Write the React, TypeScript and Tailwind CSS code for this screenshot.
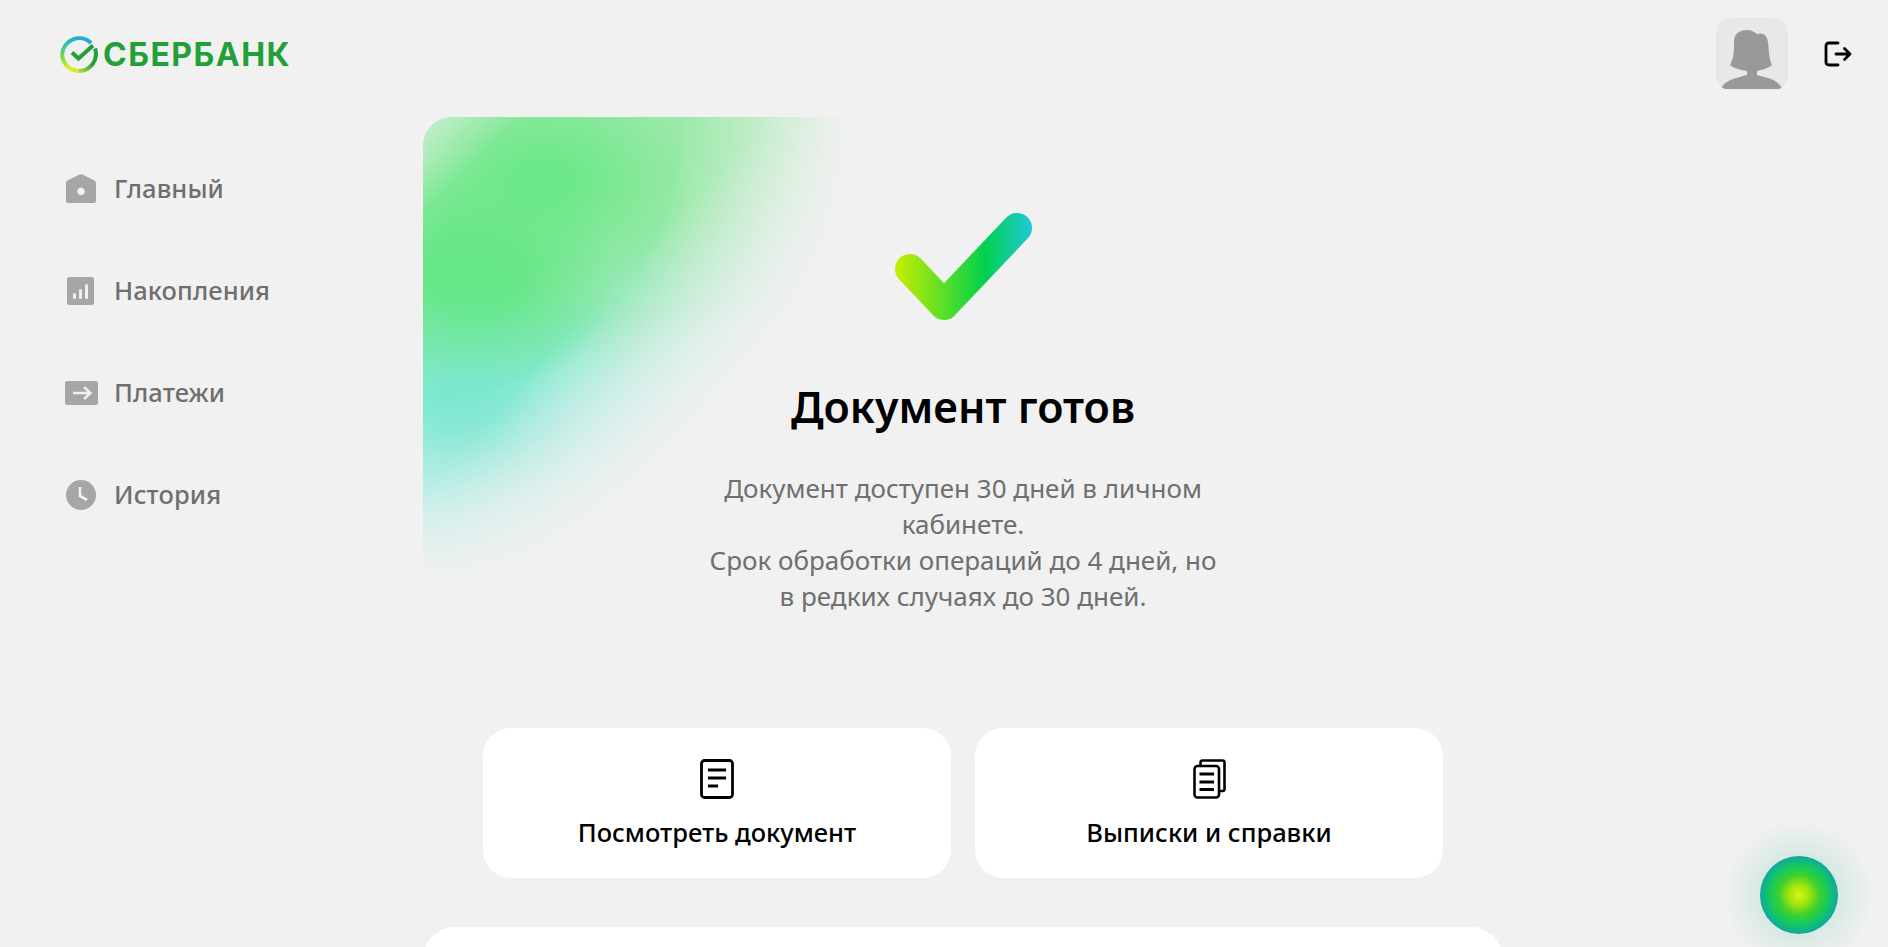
import { ReactNode } from "react";

const FONT = "font-['Noto_Sans','Open_Sans',sans-serif]";

function Logo() {
  return (
    <div className="flex items-center gap-[5px]">
      <svg width="38" height="38" viewBox="0 0 38 38" fill="none">
        <defs>
          <linearGradient id="ringTop" x1="32" y1="4" x2="3" y2="20" gradientUnits="userSpaceOnUse">
            <stop offset="0" stopColor="#1aa6e8" />
            <stop offset="0.6" stopColor="#22b7c4" />
            <stop offset="1" stopColor="#5fcf6a" />
          </linearGradient>
          <linearGradient id="ringBottom" x1="3" y1="20" x2="20" y2="36" gradientUnits="userSpaceOnUse">
            <stop offset="0" stopColor="#7dd650" />
            <stop offset="0.6" stopColor="#e3ea22" />
            <stop offset="1" stopColor="#d8e82a" />
          </linearGradient>
          <linearGradient id="ringRight" x1="18" y1="36" x2="36" y2="14" gradientUnits="userSpaceOnUse">
            <stop offset="0" stopColor="#b5e030" />
            <stop offset="0.5" stopColor="#21a038" />
            <stop offset="1" stopColor="#21a038" />
          </linearGradient>
        </defs>
        <path d="M31 8 A17 17 0 0 0 2.2 19" stroke="url(#ringTop)" strokeWidth="4" />
        <path d="M2.2 19 A17 17 0 0 0 19 36" stroke="url(#ringBottom)" strokeWidth="4" />
        <path d="M19 36 A17 17 0 0 0 35 13.5" stroke="url(#ringRight)" strokeWidth="4" />
        <path d="M12 17.5 L18.5 23.5 L33 10.5" stroke="#21a038" strokeWidth="4" strokeLinejoin="miter" />
      </svg>
      <span className="mt-[2px] font-['Inter',sans-serif] text-[32px] leading-none font-bold text-[#21a038] tracking-[1.5px]">
        СБЕРБАНК
      </span>
    </div>
  );
}

function HomeIcon() {
  return (
    <svg width="30" height="30" viewBox="0 0 30 30" fill="#a6a6a6">
      <path
        fillRule="evenodd"
        d="M13.6 0.6 Q15 0 16.4 0.6 L28.5 6.5 Q30 7.2 30 9 V27 Q30 29 28 29 H2 Q0 29 0 27 V9 Q0 7.2 1.5 6.5 Z M15 13.5 a3.8 3.8 0 1 0 0.01 0 Z"
      />
    </svg>
  );
}

function ChartIcon() {
  return (
    <svg width="28" height="28" viewBox="0 0 28 28">
      <rect width="27" height="28" rx="2.5" fill="#a6a6a6" />
      <rect x="6" y="16" width="3" height="6" rx="1.5" fill="#f1f1f1" />
      <rect x="12" y="12" width="3" height="10" rx="1.5" fill="#f1f1f1" />
      <rect x="18" y="7" width="3" height="15" rx="1.5" fill="#f1f1f1" />
    </svg>
  );
}

function PayIcon() {
  return (
    <svg width="33" height="24" viewBox="0 0 33 24">
      <rect width="33" height="24" rx="2.5" fill="#a6a6a6" />
      <path d="M8 12 H25 M19 6 L25.5 12 L19 18" stroke="#f1f1f1" strokeWidth="2.4" fill="none" />
    </svg>
  );
}

function ClockIcon() {
  return (
    <svg width="30" height="30" viewBox="0 0 30 30">
      <circle cx="15" cy="15" r="15" fill="#a6a6a6" />
      <path d="M14 7 V16 L21 20" stroke="#f1f1f1" strokeWidth="2.6" fill="none" />
    </svg>
  );
}

function NavItem(props: { icon: ReactNode; label: string }) {
  return (
    <div className="flex items-center h-[102px]">
      <div className="ml-[64px] mr-[16px] w-[34px] flex justify-center shrink-0">{props.icon}</div>
      <span className="-mt-[2px] text-[25.5px] tracking-[0.1px] font-medium text-[#6f6f6f]">{props.label}</span>
    </div>
  );
}

function DocIcon() {
  return (
    <svg width="34" height="40" viewBox="0 0 34 40" fill="none" stroke="#000" strokeWidth="2.8">
      <rect x="1.5" y="1.5" width="31" height="37" rx="3" />
      <path d="M8 11 H26 M8 19 H26 M8 27 H18" />
    </svg>
  );
}

function CopyIcon() {
  return (
    <svg width="33" height="40" viewBox="0 0 33 40" fill="none" stroke="#000" strokeWidth="2.6">
      <path d="M7.5 6 V3.5 Q7.5 1.5 9.5 1.5 H29.5 Q31.5 1.5 31.5 3.5 V30 Q31.5 32 29.5 32 H26" />
      <rect x="1.5" y="7" width="24.5" height="31.5" rx="3" />
      <path d="M6.5 15 H21 M6.5 23 H21 M6.5 30.5 H21" strokeWidth="3" />
    </svg>
  );
}

function ActionCard(props: { icon: ReactNode; label: string }) {
  return (
    <div className="flex-1 h-[150px] bg-white rounded-[28px] flex flex-col items-center pt-[31px]">
      <div className="h-[40px] flex items-center">{props.icon}</div>
      <div className="mt-[16px] text-[25.5px] leading-[34px] font-medium text-black">{props.label}</div>
    </div>
  );
}

export default function App() {
  return (
    <div className={`h-screen overflow-hidden relative bg-[#f1f1f1] ${FONT}`}>
      <header className="h-[117px] flex items-start justify-between pl-[60px] pr-[36px]">
        <div className="pt-[35px]">
          <Logo />
        </div>
        <div className="flex items-center gap-[36px] pt-[18px]">
          <div className="w-[72px] h-[72px] rounded-[14px] bg-[#e8e8e8] overflow-hidden">
            <svg width="72" height="72" viewBox="0 0 72 72" fill="#999">
              <path d="M5 71 C8 62 20 60 31 57 V53 C24 52 17 50 14 47 C18 40 18 32 18 24 C18 15 24 12 32 12 C35 12 38 14 41 16 C47 14 51 17 52 24 C53 33 53 41 56 47 C53 50 46 52 41 53 V57 C52 60 63 62 66 71 Z" />
            </svg>
          </div>
          <svg width="28" height="26" viewBox="0 0 28 26" fill="none" stroke="#000" strokeWidth="2.8" strokeLinecap="round" strokeLinejoin="round">
            <path d="M14 2 H5 Q2 2 2 5 V21 Q2 24 5 24 H14" />
            <path d="M12 13 H26 M20.5 7.5 L26 13 L20.5 18.5" />
          </svg>
        </div>
      </header>

      <div className="flex">
        <nav className="w-[423px] shrink-0 pt-[21px]">
          <NavItem icon={<HomeIcon />} label="Главный" />
          <NavItem icon={<ChartIcon />} label="Накопления" />
          <NavItem icon={<PayIcon />} label="Платежи" />
          <NavItem icon={<ClockIcon />} label="История" />
        </nav>

        <main className="w-[1080px] relative pt-[93px]">
          <div className="absolute left-0 top-0 w-[430px] h-[462px] rounded-tl-[28px] bg-[linear-gradient(135deg,rgba(241,241,241,0.55)_0,rgba(241,241,241,0)_70px),radial-gradient(ellipse_230px_150px_at_12%_68%,#72e6cf_10%,rgba(114,230,207,0.35)_55%,rgba(114,230,207,0)_100%),radial-gradient(ellipse_150px_110px_at_28%_14%,#6be888_15%,rgba(107,232,136,0)_100%),radial-gradient(ellipse_140px_120px_at_12%_34%,#68e788_35%,rgba(104,231,136,0)_100%),linear-gradient(170deg,#9ae9a8_25%,#8ee8b8_44%,#9cefe6_62%)] [mask-image:radial-gradient(ellipse_428px_465px_at_0_0,#000_60%,transparent_100%),linear-gradient(132.7deg,#000_40%,transparent_67%)] [mask-composite:intersect]" />
          <div className="relative flex flex-col items-center">
            <svg width="145" height="114" viewBox="890 210 145 114" fill="none">
              <defs>
                <linearGradient id="check" x1="894" y1="0" x2="1031" y2="0" gradientUnits="userSpaceOnUse">
                  <stop offset="0" stopColor="#c8ee00" />
                  <stop offset="0.65" stopColor="#00d14b" />
                  <stop offset="1" stopColor="#20c8d8" />
                </linearGradient>
              </defs>
              <path d="M909 269 L943 305 L1016 228" stroke="url(#check)" strokeWidth="30" strokeLinecap="round" strokeLinejoin="round" />
            </svg>
            <h1 className="mt-[53px] text-[43px] leading-[60px] font-semibold text-black">Документ готов</h1>
            <p className="mt-[33px] w-[520px] text-center text-[26px] leading-[36px] text-[#6f6f6f]">
              Документ доступен 30 дней в личном кабинете.
              <br />
              Срок обработки операций до 4 дней, но в редких случаях до 30 дней.
            </p>
            <div className="w-full mt-[114px] px-[60px] flex gap-[24px]">
              <ActionCard icon={<DocIcon />} label="Посмотреть документ" />
              <ActionCard icon={<CopyIcon />} label="Выписки и справки" />
            </div>
            <div className="w-full h-[200px] mt-[49px] bg-white rounded-[32px]" />
          </div>
        </main>
      </div>

      <div className="absolute left-[1724px] top-[820px] w-[150px] h-[150px] rounded-full bg-[radial-gradient(closest-side,rgba(205,230,220,0.75)_50%,rgba(241,241,241,0)_100%)] flex items-center justify-center">
        <div className="w-[78px] h-[78px] rounded-full bg-[radial-gradient(closest-side,#d6f514_0%,#a5e40f_25%,#3dd02e_52%,#14c860_76%,#10a8a0_100%)]" />
      </div>
    </div>
  );
}
